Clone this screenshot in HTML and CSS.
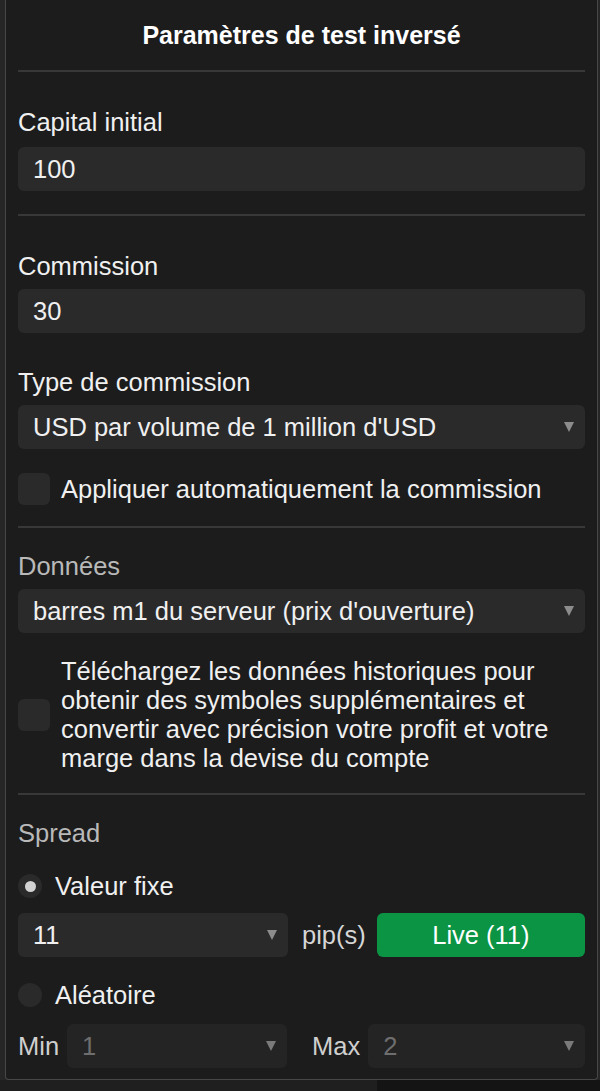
FILE: index.html
```html
<!DOCTYPE html>
<html lang="fr">
<head>
  <meta charset="UTF-8">
  <title>Paramètres de test inversé</title>
  <link rel="stylesheet" href="styles.css">
</head>
<body>

<div class="panel">
  <div class="panel-header">Paramètres de test inversé</div>
  <div class="divider"></div>

  <div class="label first top">Capital initial</div>
  <input class="field" type="text" value="100">
  <div class="divider after-field"></div>

  <div class="label first">Commission</div>
  <input class="field" type="text" value="30">

  <div class="label second">Type de commission</div>
  <div class="select">
    <span>USD par volume de 1 million d'USD</span>
    <span class="arrow"></span>
  </div>

  <label class="check-row">
    <span class="checkbox"></span>
    <span>Appliquer automatiquement la commission</span>
  </label>
  <div class="divider after-check"></div>

  <div class="label muted">Données</div>
  <div class="select">
    <span>barres m1 du serveur (prix d'ouverture)</span>
    <span class="arrow"></span>
  </div>

  <label class="check-row multi">
    <span class="checkbox"></span>
    <span class="check-text">Téléchargez les données historiques pour obtenir des symboles supplémentaires et convertir avec précision votre profit et votre marge dans la devise du compte</span>
  </label>
  <div class="divider after-para"></div>

  <div class="label muted">Spread</div>

  <label class="radio-row">
    <span class="radio checked"></span>
    <span>Valeur fixe</span>
  </label>
  <div class="spread-row">
    <div class="select small">
      <span>11</span>
      <span class="arrow"></span>
    </div>
    <span class="unit">pip(s)</span>
    <button class="live-btn">Live (11)</button>
  </div>

  <label class="radio-row random">
    <span class="radio"></span>
    <span>Aléatoire</span>
  </label>
  <div class="range-row">
    <div class="range-item">
      <span class="range-label">Min</span>
      <div class="select disabled">
        <span>1</span>
        <span class="arrow"></span>
      </div>
    </div>
    <div class="range-item">
      <span class="range-label">Max</span>
      <div class="select disabled">
        <span>2</span>
        <span class="arrow"></span>
      </div>
    </div>
  </div>
</div>

<!-- table behind the panel, only its top edge shows -->
<div class="below">
  <div class="below-cell left"></div>
  <div class="below-cell right"></div>
</div>

</body>
</html>
```

FILE: styles.css
```css
body {
  margin: 0;
  background: #262626;
  font-family: "Liberation Sans", Arial, sans-serif;
  color: #f0f0f0;
  font-size: 25.5px;
  height: 1091px;
  overflow: hidden;
}

.panel {
  margin-left: 5px;
  width: 593px;
  box-sizing: border-box;
  background: #1c1c1c;
  border: 1px solid #474747;
  border-top: none;
  border-radius: 0 0 4px 4px;
  padding: 0 12px 11px;
}

.panel-header {
  height: 70px;
  line-height: 70px;
  text-align: center;
  font-weight: bold;
  font-size: 25px;
  color: #fff;
}

.divider {
  height: 2px;
  background: #383838;
}

.divider.after-field {
  margin-top: 23px;
}

.divider.after-check {
  margin-top: 21px;
}

.divider.after-para {
  margin-top: 20px;
}

.label {
  line-height: 30px;
  margin-bottom: 8px;
}

.label.first {
  margin-top: 35px;
}

.label.top {
  margin-bottom: 10px;
}

.label.second {
  margin-top: 34px;
}

.label.muted {
  margin-top: 23px;
  color: #b9b9b9;
}

.field {
  display: block;
  width: 100%;
  height: 44px;
  box-sizing: border-box;
  border: none;
  border-radius: 6px;
  background: #2a2a2a;
  color: #f0f0f0;
  font-family: inherit;
  font-size: 25.5px;
  padding: 0 15px;
  outline: none;
}

.select {
  display: flex;
  align-items: center;
  justify-content: space-between;
  height: 44px;
  box-sizing: border-box;
  border-radius: 6px;
  background: #2a2a2a;
  padding: 0 11px 0 15px;
  color: #f0f0f0;
}

.arrow {
  width: 0;
  height: 0;
  border-left: 5px solid transparent;
  border-right: 5px solid transparent;
  border-top: 10px solid #8c8c8c;
}

.check-row {
  display: flex;
  align-items: center;
  gap: 11px;
  margin-top: 24px;
  min-height: 32px;
}

.checkbox {
  flex: none;
  width: 32px;
  height: 32px;
  border-radius: 6px;
  background: #2a2a2a;
}

.check-text {
  line-height: 29px;
}

.radio-row {
  display: flex;
  align-items: center;
  gap: 13px;
  height: 30px;
  margin-top: 23px;
}

.radio-row.random {
  margin-top: 23px;
}

.radio {
  flex: none;
  width: 24px;
  height: 24px;
  border-radius: 50%;
  background: #2a2a2a;
  display: flex;
  align-items: center;
  justify-content: center;
}

.radio.checked::after {
  content: "";
  width: 11px;
  height: 11px;
  border-radius: 50%;
  background: #d2d2d2;
}

.spread-row {
  display: flex;
  align-items: center;
  margin-top: 12px;
}

.select.small {
  width: 270px;
}

.unit {
  margin: 0 11px 0 14px;
  color: #d6d6d6;
}

.live-btn {
  flex: 1;
  height: 44px;
  border: none;
  border-radius: 6px;
  background: #0a9444;
  color: #fff;
  font-family: inherit;
  font-size: 25.5px;
  cursor: pointer;
}

.range-row {
  display: flex;
  gap: 25px;
  margin-top: 14px;
}

.range-item {
  flex: 1;
  display: flex;
  align-items: center;
  gap: 8px;
}

.range-item:first-child {
  flex: none;
  width: 269px;
}

.range-label {
  color: #cfcfcf;
}

.select.disabled {
  flex: 1;
  background: #242424;
  color: #6e6e6e;
}

.select.disabled .arrow {
  border-top-color: #7a7a7a;
}

.below {
  display: flex;
  height: 20px;
}

.below-cell.left {
  width: 377px;
  background: #1f1f1f;
}

.below-cell.right {
  flex: 1;
  background: #141414;
}
```
